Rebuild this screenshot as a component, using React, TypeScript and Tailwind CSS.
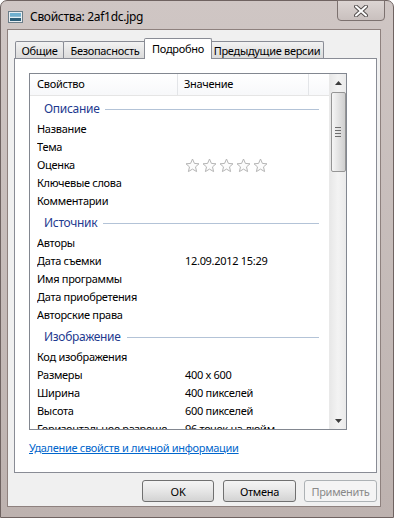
import React from "react";

const font = { fontFamily: '"Noto Sans", "Open Sans", sans-serif', letterSpacing: "-0.3px" };

function Star() {
  return (
    <svg width="15" height="15" viewBox="0 0 15 15">
      <path
        d="M7.5 1 L9.4 5.4 L14 5.8 L10.5 8.9 L11.6 13.6 L7.5 11.1 L3.4 13.6 L4.5 8.9 L1 5.8 L5.6 5.4 Z"
        fill="#fcfcfc"
        stroke="#b5b5b5"
        strokeWidth="1"
        strokeLinejoin="round"
      />
    </svg>
  );
}

type Item = { label: string; value?: string; stars?: boolean };
type Group = { title: string; items: Item[] };

const groups: Group[] = [
  {
    title: "Описание",
    items: [
      { label: "Название" },
      { label: "Тема" },
      { label: "Оценка", stars: true },
      { label: "Ключевые слова" },
      { label: "Комментарии" },
    ],
  },
  {
    title: "Источник",
    items: [
      { label: "Авторы" },
      { label: "Дата съемки", value: "12.09.2012 15:29" },
      { label: "Имя программы" },
      { label: "Дата приобретения" },
      { label: "Авторские права" },
    ],
  },
  {
    title: "Изображение",
    items: [
      { label: "Код изображения" },
      { label: "Размеры", value: "400 x 600" },
      { label: "Ширина", value: "400 пикселей" },
      { label: "Высота", value: "600 пикселей" },
      { label: "Горизонтальное разрешение", value: "96 точек на дюйм" },
    ],
  },
];

function Tab({ label, w, selected, cls }: { label: string; w: string; selected?: boolean; cls?: string }) {
  if (selected) {
    return (
      <div
        className={`${w} ${cls ?? ""} h-[21px] -mb-px relative z-10 bg-white border border-b-0 border-[#898c95] rounded-t-[2px] flex items-center justify-center text-[11px] text-black leading-none pb-[1px] whitespace-nowrap`}
      >
        {label}
      </div>
    );
  }
  return (
    <div
      className={`${w} ${cls ?? ""} h-[17px] bg-gradient-to-b from-[#f2f2f2] to-[#dbdbdb] border border-b-0 border-[#898c95] rounded-t-[2px] flex items-center justify-center text-[11px] text-black leading-none whitespace-nowrap`}
    >
      {label}
    </div>
  );
}

function Button({ label, w, disabled }: { label: string; w: string; disabled?: boolean }) {
  return (
    <div
      className={`${w} h-[22px] rounded-[3px] border flex items-center justify-center text-[11px] leading-none ${
        disabled
          ? "border-[#adb2b5] bg-[#f4f4f4] text-[#8a8a8a]"
          : "border-[#707070] bg-gradient-to-b from-[#f4f4f4] via-[#e6e6e6] to-[#d3d3d3] text-black"
      }`}
    >
      {label}
    </div>
  );
}

export default function App() {
  return (
    <div className="w-[394px] h-[519px] bg-white" style={font}>
      <div className="w-[394px] h-[518px] rounded-t-[7px] border border-[#6f6361] bg-gradient-to-b from-[#cfc6c4] to-[#bdb2af] flex flex-col">
        {/* Title bar */}
        <div className="h-[28px] flex items-start shrink-0">
          <svg width="15" height="12" viewBox="0 0 15 12" className="ml-[7px] mt-[10px]">
            <rect x="0.5" y="0.5" width="14" height="11" fill="#e8eef2" stroke="#6b7d88" />
            <rect x="2" y="2" width="11" height="8" fill="#3f86ad" />
            <rect x="2" y="2" width="11" height="3" fill="#6fb0cf" />
            <rect x="2" y="5.5" width="11" height="1.5" fill="#e4f2f7" />
            <rect x="2" y="7" width="11" height="3" fill="#2d5f79" />
          </svg>
          <div className="ml-[7px] mt-[8px] text-[12px] leading-[16px] text-black">Свойства: 2af1dc.jpg</div>
          <div className="ml-auto mr-[8px] w-[48px] h-[21px] -mt-px rounded-b-[4px] border border-[#7c716f] bg-gradient-to-b from-[#dcd5d3] to-[#c9c0be] flex items-center justify-center">
            <svg width="14" height="12" viewBox="0 0 14 12">
              <path d="M2 1.5 L12 10.5 M12 1.5 L2 10.5" stroke="#55504f" strokeWidth="4" strokeLinecap="round" />
              <path d="M2 1.5 L12 10.5 M12 1.5 L2 10.5" stroke="#ffffff" strokeWidth="2" strokeLinecap="round" />
            </svg>
          </div>
        </div>

        {/* Client area */}
        <div className="ml-[6px] mr-[12px] mb-[10px] flex-1 border border-[#8e817e] bg-[#f0f0f0] flex flex-col pl-[6px] pr-[3px] pt-[8px]">
          {/* Tabs */}
          <div className="flex items-end h-[20px] pl-[1px]">
            <Tab label="Общие" w="w-[49px]" />
            <Tab label="Безопасность" w="w-[84px]" cls="-ml-px" />
            <Tab label="Подробно" w="w-[68px]" cls="-ml-[3px]" selected />
            <Tab label="Предыдущие версии" w="w-[114px]" cls="-ml-[2px]" />
          </div>

          {/* Panel */}
          <div className="h-[415px] bg-white border border-[#898c95] pl-[14px] pt-[14px] flex flex-col">
            {/* List box */}
            <div className="w-[318px] h-[357px] border border-[#828790] flex overflow-hidden">
              <div className="w-[299px] flex flex-col overflow-hidden">
                {/* Header */}
                <div className="h-[22px] shrink-0 flex bg-gradient-to-b from-white to-[#f7f8fa] border-b border-[#e5e5e5] text-[11px] text-black">
                  <div className="w-[148px] border-r border-[#e3e5e8] pl-[7px] flex items-center">Свойство</div>
                  <div className="w-[131px] border-r border-[#e3e5e8] pl-[6px] flex items-center">Значение</div>
                  <div className="flex-1" />
                </div>
                {/* Rows */}
                {groups.map((g) => (
                  <div key={g.title} className="flex flex-col">
                    <div className="h-[24px] pt-[4px] pb-[2px] flex items-center pl-[14px] pr-[10px] shrink-0">
                      <span className="text-[12px] leading-[18px] text-[#1e3a8f] whitespace-nowrap">{g.title}</span>
                      <div className="flex-1 h-px bg-[#b3c3d7] ml-[6px]" />
                    </div>
                    {g.items.map((it) => (
                      <div key={it.label} className="h-[18px] shrink-0 flex items-center text-[11px] text-black whitespace-nowrap">
                        <div className="w-[148px] pl-[7px] shrink-0">
                          <div className="w-[130px] overflow-hidden">{it.label}</div>
                        </div>
                        <div className="pl-[7px] flex items-center">
                          {it.stars ? (
                            <div className="flex gap-[2px] mt-[1px]">
                              <Star />
                              <Star />
                              <Star />
                              <Star />
                              <Star />
                            </div>
                          ) : (
                            it.value ?? ""
                          )}
                        </div>
                      </div>
                    ))}
                  </div>
                ))}
              </div>
              {/* Scrollbar */}
              <div className="w-[17px] border-l border-[#e9e9e9] bg-gradient-to-r from-[#e8e8e8] via-[#f3f3f3] to-[#eaeaea] flex flex-col items-center">
                <div className="h-[17px] w-full flex items-center justify-center">
                  <svg width="7" height="4" viewBox="0 0 7 4">
                    <path d="M0 4 L3.5 0 L7 4 Z" fill="#3c3c3c" />
                  </svg>
                </div>
                <div className="mt-[1px] w-[15px] h-[80px] rounded-[2px] border border-[#959595] bg-gradient-to-r from-[#f6f6f6] via-[#e3e3e3] to-[#cfcfcf] flex flex-col items-center justify-center gap-[2px]">
                  <div className="w-[6px] h-px bg-[#6e6e6e]" />
                  <div className="w-[6px] h-px bg-[#6e6e6e]" />
                  <div className="w-[6px] h-px bg-[#6e6e6e]" />
                  <div className="w-[6px] h-px bg-[#6e6e6e]" />
                </div>
                <div className="flex-1" />
                <div className="h-[17px] w-full flex items-center justify-center">
                  <svg width="7" height="4" viewBox="0 0 7 4">
                    <path d="M0 0 L7 0 L3.5 4 Z" fill="#3c3c3c" />
                  </svg>
                </div>
              </div>
            </div>
            <div className="mt-[10px] text-[11px] leading-[16px] text-[#0066cc] underline">
              Удаление свойств и личной информации
            </div>
          </div>

          {/* Buttons */}
          <div className="flex justify-end mt-[7px]">
            <Button label="OK" w="w-[72px]" />
            <div className="w-[9px]" />
            <Button label="Отмена" w="w-[73px]" />
            <div className="w-[8px]" />
            <Button label="Применить" w="w-[73px]" disabled />
          </div>
        </div>
      </div>
    </div>
  );
}
